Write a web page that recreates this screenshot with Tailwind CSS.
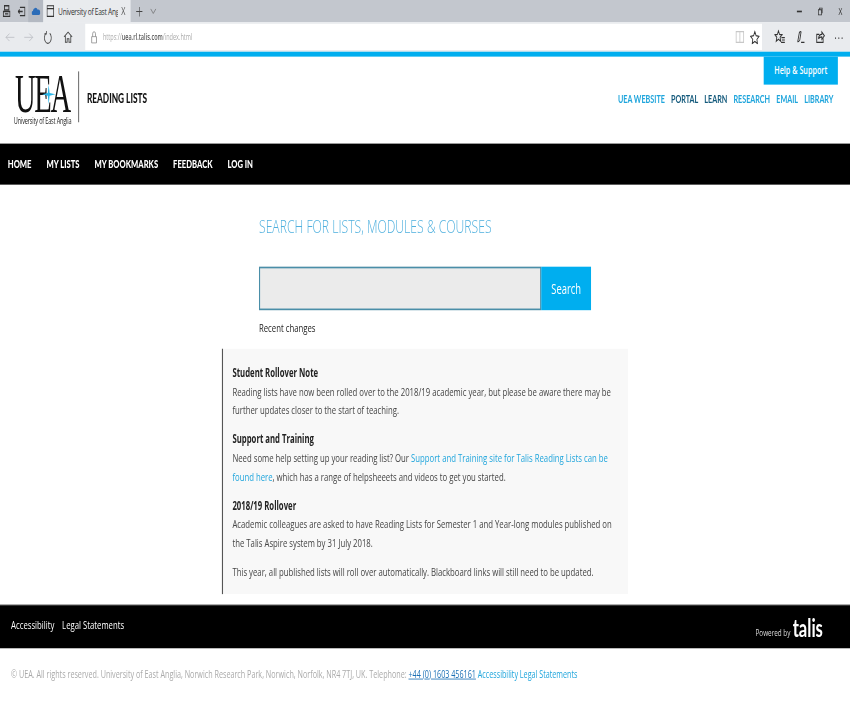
<!DOCTYPE html>
<html lang="en">
<head>
<meta charset="UTF-8">
<title>University of East Anglia - Reading Lists</title>
<script src="https://cdn.jsdelivr.net/npm/@tailwindcss/browser@4"></script>
</head>
<body class="bg-white">
<div class="w-[850px] h-[709px] overflow-hidden">
<!-- the capture is a 1536x864 desktop squeezed into 850x709, so the page is laid out at full size and scaled -->
<div class="w-[1536px] h-[864px] origin-top-left [transform:scale(0.5534,0.8206)] font-['Open_Sans',sans-serif] text-[14px] text-[#333]">

  <!-- browser tab bar -->
  <div class="h-[27px] bg-[#c3c7ce] flex items-center text-[#333]">
    <div class="w-[51px] flex items-center justify-between pl-[5px] pr-[5px] shrink-0">
      <svg class="w-[14px] h-[16px]" viewBox="0 0 14 16" fill="none" stroke="#333" stroke-width="1.600"><path d="M3 1h8v5H3zM1 8h12v6H1z"/><path d="M4 11h6"/></svg>
      <svg class="w-[14px] h-[14px]" viewBox="0 0 14 14" fill="none" stroke="#333" stroke-width="1.600"><path d="M4 2h9v10H4M1 7h8M3.500 4.500 1 7l2.500 2.500"/></svg>
    </div>
    <div class="w-[27px] h-full bg-[#b4b9c2] flex items-center justify-center shrink-0">
      <svg class="w-[16px] h-[13px]" viewBox="0 0 20 14"><path fill="#2b6cb8" d="M3 13a3 3 0 0 1 0-6 6 6 0 0 1 11-2 4 4 0 0 1 3 8z"/></svg>
    </div>
    <div class="w-[158px] h-full bg-[#e9ebee] flex items-center pl-[6px] text-[12px] shrink-0">
      <svg class="w-[14px] h-[15px] shrink-0" viewBox="0 0 14 15" fill="none" stroke="#333" stroke-width="1.400"><path d="M1 1h12v13H1zM1 4.500h12"/></svg>
      <span class="ml-[7px] whitespace-nowrap overflow-hidden w-[108px] tracking-[-0.5px] leading-[18px]">University of East Anglia</span>
      <span class="ml-[6px] text-[13px] text-[#555]">X</span>
    </div>
    <span class="ml-[9px] text-[24px] font-light leading-none text-[#444]">+</span>
    <svg class="ml-[12px] w-[12px] h-[8px]" viewBox="0 0 18 10" preserveAspectRatio="none" fill="none" stroke="#666" stroke-width="1.300"><path d="m2 1 7 7 7-7"/></svg>
    <div class="ml-auto flex items-center gap-[28px] pr-[14px] text-[#333]">
      <span class="w-[9px] h-[2px] bg-[#333]"></span>
      <svg class="w-[10px] h-[10px]" viewBox="0 0 16 14" preserveAspectRatio="none" fill="none" stroke="#333" stroke-width="2"><path d="M3 4h9v9H3zM6 4V1h8v8h-2"/></svg>
      <span class="text-[12px] leading-none">X</span>
    </div>
  </div>

  <!-- browser toolbar -->
  <div class="h-[36px] bg-[#e9ebee] flex items-center">
    <div class="w-[154px] flex items-center pl-[9px] shrink-0">
      <svg class="w-[18px] h-[13px]" viewBox="0 0 20 20" preserveAspectRatio="none" fill="none" stroke="#b5b8bd" stroke-width="1.400"><path d="M19 10H2M9 3l-7 7 7 7"/></svg>
      <svg class="ml-[16px] w-[18px] h-[13px]" viewBox="0 0 20 20" preserveAspectRatio="none" fill="none" stroke="#b5b8bd" stroke-width="1.400"><path d="M1 10h17M11 3l7 7-7 7"/></svg>
      <svg class="ml-[18px] w-[15px] h-[17px]" viewBox="0 0 22 24" preserveAspectRatio="none" fill="none" stroke="#444" stroke-width="2"><path d="M6 5a9 9.500 0 1 0 10 0M7 1v5H2"/></svg>
      <svg class="ml-[20px] w-[18px] h-[16px]" viewBox="0 0 22 22" preserveAspectRatio="none" fill="none" stroke="#444" stroke-width="1.800"><path d="m2 11 9-8 9 8M5 9v11h4v-6h4v6h4V9"/></svg>
    </div>
    <div class="w-[1223px] h-[32px] bg-white flex items-center pl-[9px] text-[10px] shrink-0">
      <svg class="w-[14px] h-[17px] mr-[9px]" viewBox="0 0 16 20" preserveAspectRatio="none" fill="none" stroke="#888" stroke-width="1.300"><path d="M3 9h10v9H3zM5 9V5a3 3 0 0 1 6 0v4"/></svg>
      <span class="text-[#aaa]">https://</span><span class="text-[#555] font-semibold">uea.rl.talis.com</span><span class="text-[#aaa]">/index.html</span>
      <div class="ml-auto flex items-center gap-[9px] pr-[4px]">
        <svg class="w-[18px] h-[16px]" viewBox="0 0 24 22" preserveAspectRatio="none" fill="none" stroke="#c8c8c8" stroke-width="2"><path d="M3 2h18v18H3zM12 2v18"/></svg>
        <svg class="w-[18px] h-[17px]" viewBox="0 0 24 22" preserveAspectRatio="none" fill="none" stroke="#333" stroke-width="2"><path d="m12 2 3 6.500 7 1-5 4.700 1.300 6.800-6.300-3.400L5.700 21 7 14.200 2 9.500l7-1z"/></svg>
      </div>
    </div>
    <div class="flex items-center pl-[22px]">
      <svg class="w-[20px] h-[18px]" viewBox="0 0 26 24" preserveAspectRatio="none" fill="none" stroke="#333" stroke-width="2"><path d="m10 2 2.500 6 6 .6-4.600 4 1.400 6.400-5.300-3.300L4.700 19l1.400-6.400-4.600-4 6-.6zM17 13h8M18 17h7M16 21h9"/></svg>
      <svg class="ml-[17px] w-[20px] h-[18px]" viewBox="0 0 26 24" preserveAspectRatio="none" fill="none" stroke="#333" stroke-width="2"><path d="M7 20 11 5q2-3 4-1l-3 13q-2 3-5 3M15 21h8"/></svg>
      <svg class="ml-[16px] w-[20px] h-[18px]" viewBox="0 0 26 24" preserveAspectRatio="none" fill="none" stroke="#333" stroke-width="2"><path d="M20 14v7H5V8h6M9 15q1-7 8-7V4l6 6-6 6v-4q-5 0-8 3"/></svg>
      <span class="ml-[16px] text-[15px] leading-none tracking-[2px] text-[#333] -mt-2">...</span>
    </div>
  </div>

  <!-- blue strip + site header -->
  <div class="h-[6px] bg-[#00aeef]"></div>
  <header class="h-[106px] relative flex">
    <div class="w-[100px] ml-[27px] mt-[20px] shrink-0 flex flex-col items-center">
      <div class="relative w-[100px] h-[50px]">
        <span class="block origin-top-left [transform:scaleX(0.76)] font-['Liberation_Serif',serif] text-[68px] leading-[50px] text-[#111] tracking-[-3px] whitespace-nowrap">UEA</span>
        <svg class="absolute left-[49px] top-[14px] w-[24px] h-[24px]" viewBox="0 0 30 30"><path fill="#29b6e8" d="M15 0l2 13 13 2-13 2-2 13-2-13-13-2 13-2z"/></svg>
      </div>
      <span class="mt-[1px] text-[10px] leading-[14px] text-[#222] whitespace-nowrap tracking-[-0.3px]">University of East Anglia</span>
    </div>
    <div class="w-[2px] h-[62px] bg-[#777] ml-[14px] mt-[18px]"></div>
    <div class="ml-[14px] mt-[38px] text-[15px] font-black font-['Lato',sans-serif] text-[#111] leading-[24px] whitespace-nowrap">READING LISTS</div>
    <a class="absolute right-[22px] top-0 w-[134px] h-[34px] bg-[#00aeef] text-white font-semibold text-[13px] flex items-center justify-center whitespace-nowrap">Help &amp; Support</a>
    <nav class="absolute right-[30px] top-[43px] flex gap-[11px] text-[13px] font-bold font-['Lato',sans-serif] text-[#1fa5dc] whitespace-nowrap">
      <span>UEA WEBSITE</span>
      <span class="text-[#145a7c]">PORTAL</span>
      <span class="text-[#145a7c]">LEARN</span>
      <span>RESEARCH</span>
      <span>EMAIL</span>
      <span>LIBRARY</span>
    </nav>
  </header>

  <!-- black nav -->
  <nav class="h-[50px] bg-black flex items-center pl-[14px] gap-[27px] text-white font-black font-['Lato',sans-serif] text-[13.800px] whitespace-nowrap">
    <span>HOME</span><span>MY LISTS</span><span>MY BOOKMARKS</span><span>FEEDBACK</span><span>LOG IN</span>
  </nav>

  <!-- main content -->
  <main class="h-[512px] flex flex-col pt-[32px]">
    <div class="pl-[468px]">
      <h1 class="text-[22px] leading-[36px] font-light text-[#4fb0de] whitespace-nowrap">SEARCH FOR LISTS, MODULES &amp; COURSES</h1>
      <form class="flex mt-[32px]">
        <div class="w-[510px] h-[53px] bg-[#ebebeb] border-2 border-[#4a8ea8]"></div>
        <button type="button" class="w-[90px] h-[53px] bg-[#00aeef] text-white text-[17px]">Search</button>
      </form>
      <p class="mt-[10px] text-[14px] leading-[24px] text-[#222]">Recent changes</p>
    </div>
    <div class="ml-[401px] mt-[13px] w-[734px] h-[299px] bg-[#f8f8f8] border-l-2 border-[#555] pl-[17px] pr-[20px] pt-[17px] leading-[23px] text-[#444]">
      <p class="font-bold text-[#222]">Student Rollover Note</p>
      <p class="mb-[12px]">Reading lists have now been rolled over to the 2018/19 academic year, but please be aware there may be further updates closer to the start of teaching.</p>
      <p class="font-bold text-[#222]">Support and Training</p>
      <p class="mb-[12px]">Need some help setting up your reading list? Our <a class="text-[#1fa5dc]">Support and Training site for Talis Reading Lists can be found here</a>, which has a range of helpsheeets and videos to get you started.</p>
      <p class="font-bold text-[#222]">2018/19 Rollover</p>
      <p class="mb-[12px]">Academic colleagues are asked to have Reading Lists for Semester 1 and Year-long modules published on the Talis Aspire system by 31 July 2018.</p>
      <p>This year, all published lists will roll over automatically. Blackboard links will still need to be updated.</p>
    </div>
  </main>

  <!-- footer -->
  <footer class="h-[53px] bg-black border-t border-[#555] flex items-center pl-[20px] pr-[49px] text-white">
    <div class="-mt-[8px] flex">
      <a>Accessibility</a><a class="ml-[14px]">Legal Statements</a>
    </div>
    <div class="ml-auto flex items-end gap-[4px]">
      <span class="text-[11.500px] leading-[16px] text-[#ddd]">Powered by</span>
      <span class="text-[30px] leading-[30px] font-bold font-['Lato',sans-serif]">talis</span>
    </div>
  </footer>
  <p class="pl-[20px] mt-[22px] text-[13px] text-[#aaa] whitespace-nowrap">© UEA. All rights reserved. University of East Anglia, Norwich Research Park, Norwich, Norfolk, NR4 7TJ, UK. Telephone: <a class="text-[#1a6fb5] underline">+44 (0) 1603 456161</a> <a class="text-[#1fa5dc]">Accessibility</a> <a class="text-[#1fa5dc]">Legal Statements</a></p>
</div>
</div>
</body>
</html>
